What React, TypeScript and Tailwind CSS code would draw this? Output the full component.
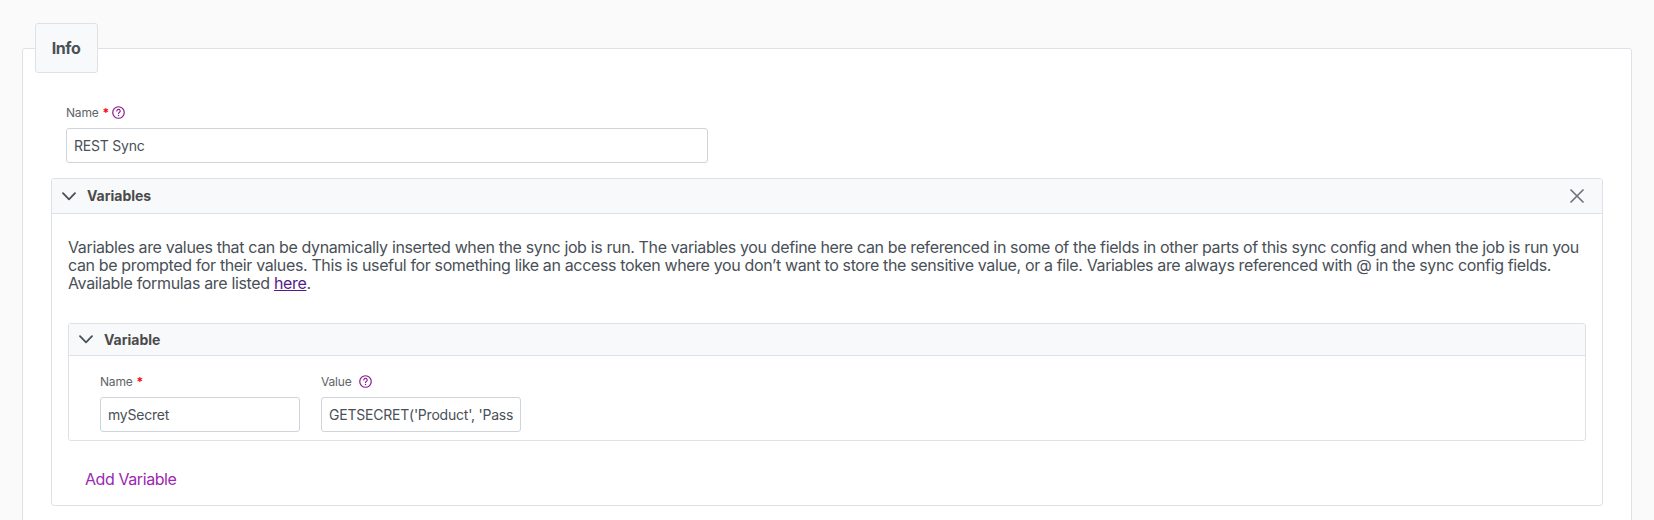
import type { ReactNode } from 'react';

function HelpIcon() {
  return (
    <svg className="block size-[13px] text-[#8b1a8f]" viewBox="0 0 14 14" fill="none" stroke="currentColor" strokeLinecap="round">
      <circle cx="7" cy="7" r="6.2" strokeWidth="1.3" />
      <path d="M5.2 5.4a1.8 1.8 0 1 1 2.7 1.5c-.6.35-.9.6-.9 1.2" strokeWidth="1.25" />
      <circle cx="7" cy="10.2" r=".8" fill="currentColor" stroke="none" />
    </svg>
  );
}

function Chevron() {
  return (
    <svg className="block h-[9px] w-[14px] text-[#495057]" viewBox="0 0 14 9" fill="none" stroke="currentColor" strokeWidth="1.8" strokeLinecap="round" strokeLinejoin="round">
      <path d="M1 1.2 7 7.4l6-6.2" />
    </svg>
  );
}

function Label({ text, required, help }: { text: string; required?: boolean; help?: boolean }) {
  return (
    <div className="flex h-4 items-center text-xs leading-4 tracking-[-0.18px] text-[#5f6468]">
      <span>{text}</span>
      {required && <span className="ml-1 text-xs font-bold leading-4 text-[#ff0000]">*</span>}
      {help && <span className={required ? 'ml-[3px] pb-0.5' : 'ml-[7px] pb-0.5'}><HelpIcon /></span>}
    </div>
  );
}

function Field({ text, value, required, help, width }: { text: string; value: string; required?: boolean; help?: boolean; width: string }) {
  return (
    <div className={width}>
      <Label text={text} required={required} help={help} />
      <input
        aria-label={text}
        defaultValue={value}
        className="mt-[7px] block h-[35px] w-full rounded-[3px] border border-[#ced4da] bg-white px-[7px] text-sm tracking-[-0.22px] text-[#495057] outline-none"
      />
    </div>
  );
}

function Panel({ title, header, action, children }: { title: string; header: string; action?: ReactNode; children: ReactNode }) {
  return (
    <section className="overflow-hidden rounded-[3px] border border-[#dee2e6] bg-white">
      <header className={`flex items-center border-b border-[#dee2e6] bg-[#f8f9fb] pr-[18.5px] pl-[10px] ${header}`}>
        <Chevron />
        <h2 className="ml-[11px] text-sm leading-5 font-bold tracking-[-0.02px] text-[#4b4b4b]">{title}</h2>
        {action}
      </header>
      {children}
    </section>
  );
}

export default function App() {
  return (
    <div className="h-[520px] overflow-hidden bg-[#fafafa] pt-12 pr-[22px] pl-[22px] font-['Inter',sans-serif] text-[#495057]">
      <main className="h-[560px] rounded-[3px] border border-[#dee2e6] bg-white pr-7 pl-7">
        <div className="-mt-[26px] -ml-4 flex h-[50px] w-[63px] items-center justify-center rounded-[3px] border border-[#dee2e6] bg-[#f8f9fb] pr-px text-base font-bold tracking-[-0.4px]">
          Info
        </div>
        <div className="mt-8 pb-[15px] pl-[15px]">
          <Field text="Name" value="REST Sync" required help width="w-[642px]" />
        </div>
        <Panel
          title="Variables"
          header="h-[35px]"
          action={
            <button aria-label="Remove" className="ml-auto text-[#6c757d]">
              <svg className="block size-[14px]" viewBox="0 0 14 14" fill="none" stroke="currentColor" strokeWidth="1.7" strokeLinecap="round">
                <path d="m1 1 12 12M13 1 1 13" />
              </svg>
            </button>
          }
        >
          <div className="px-4 pt-6 pb-[15px]">
            <p className="text-base leading-[18px] tracking-[-0.368px] whitespace-nowrap">
              Variables are values that can be dynamically inserted when the sync job is run. The variables you define here can be referenced in some of the fields in other parts of this sync config and when the job is run you
              <br />
              <span className="tracking-[-0.36px]">can be prompted for their values. This is useful for something like an access token where you don’t want to store the sensitive value, or a file. Variables are always referenced with @ in the sync config fields.</span>
              <br />
              <span className="tracking-[-0.34px]">Available formulas are listed <a href="#" className="text-[#551a8b] underline">here</a>.</span>
            </p>
            <div className="mt-[31px]">
              <Panel title="Variable" header="h-8">
                <div className="flex gap-[21px] pt-[18px] pb-2 pl-[31px]">
                  <Field text="Name" value="mySecret" required width="w-[200px]" />
                  <Field text="Value" value="GETSECRET('Product', 'Password')" help width="w-[200px]" />
                </div>
              </Panel>
            </div>
            <button className="mt-7 ml-[17px] block text-base leading-[21px] tracking-[-0.42px] text-[#9c27b0]">Add Variable</button>
          </div>
        </Panel>
      </main>
    </div>
  );
}
